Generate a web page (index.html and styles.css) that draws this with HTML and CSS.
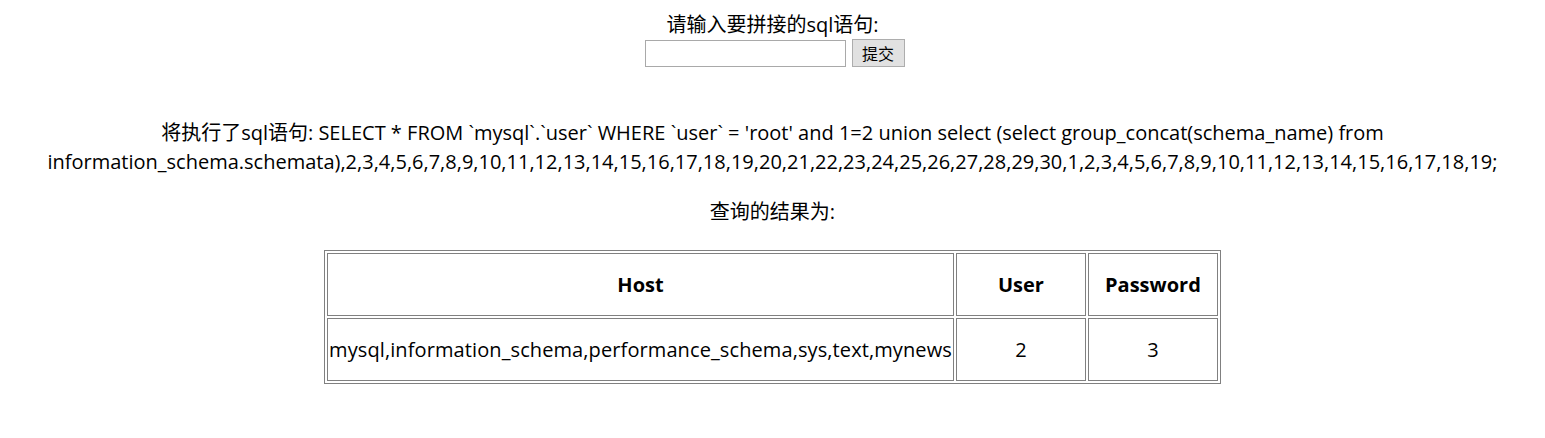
FILE: index.html
```
<!DOCTYPE html>
<html lang="zh">
<head>
<meta charset="utf-8">
<title>sql</title>
<link rel="stylesheet" href="styles.css">
</head>
<body>
<div class="page">
  <div class="prompt">请输入要拼接的sql语句:</div>
  <form class="form">
    <input class="field" type="text" name="sql">
    <button class="submit" type="button">提交</button>
  </form>
  <p class="exec">将执行了sql语句: SELECT * FROM `mysql`.`user` WHERE `user` = 'root' and 1=2 union select (select group_concat(schema_name) from information_schema.schemata),2,3,4,5,6,7,8,9,10,11,12,13,14,15,16,17,18,19,20,21,22,23,24,25,26,27,28,29,30,1,2,3,4,5,6,7,8,9,10,11,12,13,14,15,16,17,18,19;</p>
  <p class="result">查询的结果为:</p>
  <table class="grid">
    <tr>
      <th class="c-host">Host</th>
      <th class="c-narrow">User</th>
      <th class="c-narrow">Password</th>
    </tr>
    <tr>
      <td class="c-host">mysql,information_schema,performance_schema,sys,text,mynews</td>
      <td>2</td>
      <td>3</td>
    </tr>
  </table>
</div>
</body>
</html>
```
FILE: styles.css
```
html, body {
  margin: 0;
  padding: 0;
  background: #fff;
}
body {
  font-family: "Open Sans", "Noto Sans CJK SC", sans-serif;
  font-size: 20px;
  line-height: 29px;
  color: #000;
}
.page {
  display: flex;
  flex-direction: column;
  align-items: center;
  text-align: center;
  padding: 10px 8px 0;
}
.prompt {
  height: 29px;
}
.form {
  display: flex;
  align-items: center;
  gap: 6px;
  margin: 0 0 0 4px;
  height: 28px;
}
.field {
  box-sizing: border-box;
  width: 201px;
  height: 27px;
  border: 1px solid #a9a9a9;
  margin: 0;
  padding: 1px 3px;
  font-size: 16px;
}
.submit {
  box-sizing: border-box;
  height: 28px;
  width: 53px;
  margin: 0;
  padding: 0;
  border: 1px solid #adadad;
  background: #e1e1e1;
  font-family: "Noto Sans CJK SC", sans-serif;
  font-size: 16px;
  line-height: 26px;
  color: #000;
}
.exec {
  margin: 51px 0 0;
}
.result {
  margin: 21px 0 0;
}
.grid {
  margin-top: 24px;
  border: 1px solid #808080;
  border-spacing: 2px;
  font-size: 20px;
}
.grid th, .grid td {
  border: 1px solid #808080;
  padding: 0 1px;
  height: 61px;
  text-align: center;
  vertical-align: middle;
}
.grid th {
  font-weight: bold;
}
.grid td.c-host {
  letter-spacing: 0.1px;
}
.c-narrow {
  width: 126px;
}
```
